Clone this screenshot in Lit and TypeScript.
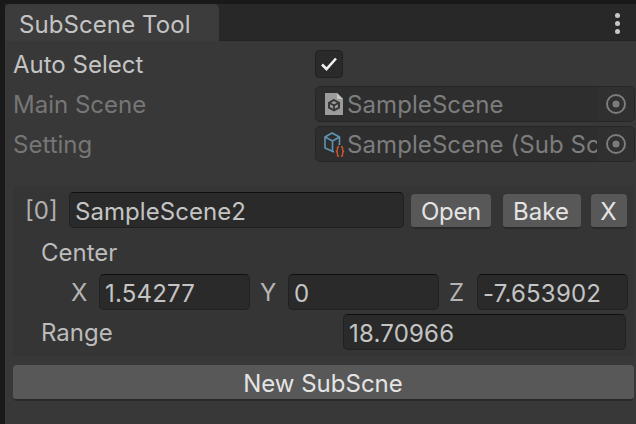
import { LitElement, html, css, svg } from "lit";
import { customElement } from "lit/decorators.js";

const target = svg`<svg class="target" width="22" height="22" viewBox="0 0 22 22"><circle cx="11" cy="11" r="9" fill="none" stroke="#7c7c7c" stroke-width="2"/><circle cx="11" cy="11" r="3.5" fill="#7c7c7c"/></svg>`;

const sceneIcon = svg`<svg class="ico" width="22" height="24" viewBox="0 0 22 24"><path d="M2 1H14L20 7V23H2Z" fill="#9c9c9c"/><path d="M14 1V7H20Z" fill="#c4c4c4"/><path d="M11 8L16 10.8V15.6L11 18.4L6 15.6V10.8Z" fill="none" stroke="#383838" stroke-width="2"/><path d="M6.5 11L11 13.4L15.5 11M11 13.4V18" fill="none" stroke="#383838" stroke-width="1.8"/></svg>`;

const settingIcon = svg`<svg class="ico" width="22" height="26" viewBox="0 0 22 26"><g fill="none" stroke="#5f93b3" stroke-width="1.6" stroke-linejoin="round"><path d="M9 2L16.5 6V13.5L11 21L2 17V6Z"/><path d="M2 6L9.5 10L16.5 6M9.5 10V20"/></g><rect x="11" y="14" width="11" height="12" fill="#2e2e2e"/><g fill="none" stroke="#c8552b" stroke-width="1.5"><path d="M16 15.5C14.5 15.5 14.4 16.5 14.4 18V19C14.4 20 14 20.5 12.8 20.5C14 20.5 14.4 21 14.4 22V23C14.4 24.5 14.5 25.5 16 25.5"/><path d="M18 15.5C19.5 15.5 19.6 16.5 19.6 18V19C19.6 20 20 20.5 21.2 20.5C20 20.5 19.6 21 19.6 22V23C19.6 24.5 19.5 25.5 18 25.5"/></g></svg>`;

@customElement("app-root")
export class AppRoot extends LitElement {
  static styles = css`
    :host {
      display: block;
      width: 636px;
      height: 424px;
      overflow: hidden;
      font-family: Inter, "Noto Sans", sans-serif;
      font-size: 24px;
      line-height: 36px;
      color: #c4c4c4;
      background: #191919;
    }
    .window {
      height: 100%;
      box-sizing: border-box;
      padding: 4px 0 0 5px;
      display: flex;
      flex-direction: column;
    }
    .tabbar {
      height: 37px;
      flex: none;
      display: flex;
      justify-content: space-between;
      background: #282828;
      border-bottom: 1px solid #232323;
      box-sizing: border-box;
    }
    .tab {
      width: 214px;
      height: 37px;
      box-sizing: border-box;
      padding-left: 14px;
      background: #3c3c3c;
      border-radius: 5px 5px 0 0;
      line-height: 42px;
      color: #c4c4c4;
      letter-spacing: 0.08px;
    }
    .dots {
      width: 38px;
      display: flex;
      flex-direction: column;
      align-items: center;
      gap: 3px;
      padding-top: 9px;
      box-sizing: border-box;
    }
    .dots i {
      width: 5px;
      height: 5px;
      border-radius: 50%;
      background: #c8c8c8;
    }
    .body {
      flex: 1;
      background: #383838;
      padding: 5px 0 0 8px;
      display: flex;
      flex-direction: column;
      min-height: 0;
    }
    .row {
      display: flex;
      align-items: center;
      height: 36px;
      margin-top: 4px;
    }
    .row:first-child {
      margin-top: 0;
    }
    .label {
      width: 302px;
      flex: none;
      padding-top: 2px;
    }
    .disabled {
      color: #767676;
    }
    .check {
      width: 28px;
      height: 28px;
      box-sizing: border-box;
      border-radius: 4px;
      background: #2a2a2a;
      border: 1px solid #212121;
      display: flex;
      align-items: center;
      justify-content: center;
    }
    .objfield {
      width: 320px;
      height: 36px;
      box-sizing: border-box;
      flex: none;
      display: flex;
      align-items: center;
      background: #2e2e2e;
      border: 1px solid #262626;
      border-radius: 5px;
      color: #7d7d7d;
      padding-left: 7px;
      position: relative;
      overflow: hidden;
    }
    .objname {
      white-space: nowrap;
      overflow: hidden;
      width: 250px;
      flex: none;
      padding-left: 2px;
      padding-top: 1px;
      letter-spacing: 0.08px;
    }
    .ico {
      flex: none;
    }
    .target {
      position: absolute;
      right: 7px;
      top: 6px;
    }
    .picker {
      position: absolute;
      right: 0;
      top: 0;
      bottom: 0;
      width: 37px;
      background: #303030;
    }
    .group {
      margin-top: 24px;
      height: 170px;
      box-sizing: border-box;
      background: #353535;
      padding: 6px 8px 0 13px;
      margin-right: 2px;
      display: flex;
      flex-direction: column;
    }
    .namerow {
      display: flex;
      align-items: flex-start;
      height: 36px;
    }
    .index {
      width: 44px;
      margin-left: -1px;
      flex: none;
      color: #b0b0b0;
      line-height: 38px;
    }
    .input {
      box-sizing: border-box;
      height: 36px;
      background: #2a2a2a;
      border: 1px solid #212121;
      border-top-color: #0f0f0f;
      border-radius: 5px;
      padding-left: 5px;
      line-height: 37px;
      color: #c4c4c4;
      white-space: nowrap;
      overflow: hidden;
      letter-spacing: 0.2px;
    }
    .name {
      width: 335px;
      flex: none;
      letter-spacing: 0.05px;
    }
    .btn {
      box-sizing: border-box;
      height: 35px;
      margin-top: 2px;
      background: #585858;
      border-bottom: 2px solid #2a2a2a;
      border-radius: 4px;
      text-align: center;
      line-height: 35px;
      color: #e4e4e4;
      flex: none;
    }
    .open { width: 80px; margin-left: 7px; letter-spacing: -0.3px; }
    .bake { width: 78px; margin-left: 12px; padding-right: 2px; }
    .x { width: 36px; margin-left: 10px; padding-right: 1px; }
    .sub {
      padding-left: 15px;
      color: #bcbcbc;
      height: 36px;
      margin-top: 7px;
    }
    .xyz {
      display: flex;
      align-items: center;
      height: 36px;
      margin-top: 3px;
      padding-left: 45px;
    }
    .axis {
      flex: none;
      width: 28px;
      color: #b4b4b4;
      padding-top: 2px;
    }
    .axis.next { width: 28px; margin-left: 10px; }
    .num { width: 151px; flex: none; }
    .rangerow {
      display: flex;
      align-items: center;
      height: 36px;
      margin-top: 4px;
      padding-left: 15px;
      color: #bcbcbc;
    }
    .rangelabel { width: 302px; flex: none; padding-top: 2px; }
    .range { width: 283px; flex: none; }
    .newbtn {
      margin-top: 9px;
      margin-right: 2px;
      height: 36px;
      box-sizing: border-box;
      background: #585858;
      border-bottom: 2px solid #2a2a2a;
      border-radius: 4px;
      text-align: center;
      line-height: 38px;
      padding-right: 1px;
      color: #e4e4e4;
      flex: none;
    }
  `;

  render() {
    return html`<div class="window">
      <div class="tabbar">
        <div class="tab">SubScene Tool</div>
        <div class="dots"><i></i><i></i><i></i></div>
      </div>
      <div class="body">
        <div class="row">
          <div class="label">Auto Select</div>
          <div class="check">
            <svg width="20" height="20" viewBox="0 0 20 20"><path d="M3 10.5L7.5 15L17 4.5" fill="none" stroke="#f0f0f0" stroke-width="2.6"/></svg>
          </div>
        </div>
        <div class="row">
          <div class="label disabled">Main Scene</div>
          <div class="objfield">${sceneIcon}<span class="objname">SampleScene</span><span class="picker"></span>${target}</div>
        </div>
        <div class="row">
          <div class="label disabled">Setting</div>
          <div class="objfield">${settingIcon}<span class="objname">SampleScene (Sub Scene)</span><span class="picker"></span>${target}</div>
        </div>
        <div class="group">
          <div class="namerow">
            <div class="index">[0]</div>
            <div class="input name">SampleScene2</div>
            <div class="btn open">Open</div>
            <div class="btn bake">Bake</div>
            <div class="btn x">X</div>
          </div>
          <div class="sub">Center</div>
          <div class="xyz">
            <div class="axis">X</div>
            <div class="input num">1.54277</div>
            <div class="axis next">Y</div>
            <div class="input num">0</div>
            <div class="axis next">Z</div>
            <div class="input num">-7.653902</div>
          </div>
          <div class="rangerow">
            <div class="rangelabel">Range</div>
            <div class="input range">18.70966</div>
          </div>
        </div>
        <div class="newbtn">New SubScne</div>
      </div>
    </div>`;
  }
}
